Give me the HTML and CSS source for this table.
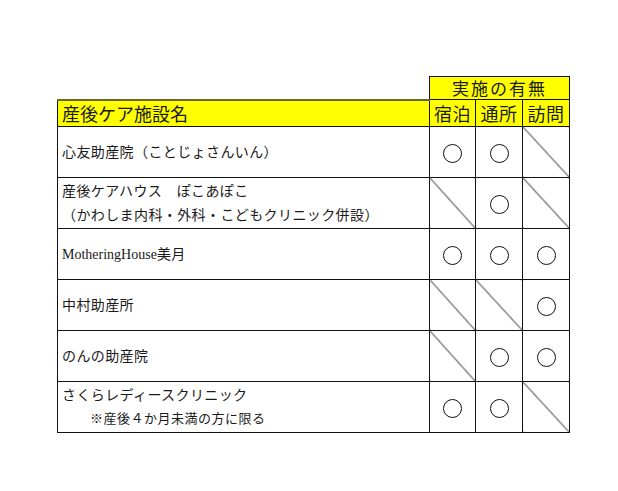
FILE: index.html
```html
<!DOCTYPE html>
<html lang="ja">
<head>
<meta charset="utf-8">
<link rel="stylesheet" href="styles.css">
</head>
<body>
<table class="sheet">
  <colgroup>
    <col class="c-name">
    <col class="c-flag1">
    <col class="c-flag">
    <col class="c-flag">
  </colgroup>
  <tr class="r-top">
    <td class="blank"></td>
    <td class="yellow group" colspan="3">実施の有無</td>
  </tr>
  <tr class="r-head">
    <td class="yellow head-name">産後ケア施設名</td>
    <td class="yellow head-flag">宿泊</td>
    <td class="yellow head-flag">通所</td>
    <td class="yellow head-flag">訪問</td>
  </tr>
  <tr class="r-body">
    <td class="name">心友助産院（ことじょさんいん）</td>
    <td class="flag"><span class="mark"></span></td>
    <td class="flag"><span class="mark"></span></td>
    <td class="flag na"></td>
  </tr>
  <tr class="r-body">
    <td class="name two"><div>産後ケアハウス　ぽこあぽこ</div><div>（かわしま内科・外科・こどもクリニック併設）</div></td>
    <td class="flag na"></td>
    <td class="flag"><span class="mark"></span></td>
    <td class="flag na"></td>
  </tr>
  <tr class="r-body">
    <td class="name"><span class="latin">MotheringHouse</span>美月</td>
    <td class="flag"><span class="mark"></span></td>
    <td class="flag"><span class="mark"></span></td>
    <td class="flag"><span class="mark"></span></td>
  </tr>
  <tr class="r-body">
    <td class="name">中村助産所</td>
    <td class="flag na"></td>
    <td class="flag na"></td>
    <td class="flag"><span class="mark"></span></td>
  </tr>
  <tr class="r-body">
    <td class="name">のんの助産院</td>
    <td class="flag na"></td>
    <td class="flag"><span class="mark"></span></td>
    <td class="flag"><span class="mark"></span></td>
  </tr>
  <tr class="r-body">
    <td class="name two"><div>さくらレディースクリニック</div><div class="note">※産後４か月未満の方に限る</div></td>
    <td class="flag"><span class="mark"></span></td>
    <td class="flag"><span class="mark"></span></td>
    <td class="flag na"></td>
  </tr>
</table>
</body>
</html>
```
FILE: styles.css
```css
html, body {
  margin: 0;
  padding: 0;
  background: #ffffff;
}

body {
  font-family: "Noto Sans CJK JP", "Noto Sans", sans-serif;
  color: #1a1a1a;
  padding: 76px 0 0 57px;
}

.sheet {
  border-collapse: collapse;
  table-layout: fixed;
  width: 512px;
}

.c-name { width: 372px; }
.c-flag1 { width: 46px; }
.c-flag { width: 47px; }

.sheet td {
  border: 1px solid #111;
  padding: 0;
}

.sheet td.blank {
  border: none;
  border-bottom: 2px solid #666633;
}

.yellow {
  background: #ffff00;
}

.r-top { height: 23px; }
.r-head { height: 27px; }
.r-body { height: 51px; }

.group {
  text-align: center;
  font-size: 17px;
  letter-spacing: 2px;
  line-height: 20px;
}

.head-name {
  font-size: 18px;
  line-height: 22px;
  padding-left: 4px !important;
  border-top: 2px solid #666633 !important;
}

.head-flag {
  text-align: center;
  font-size: 18px;
  line-height: 22px;
  letter-spacing: 0.5px;
}

.name {
  font-size: 14px;
  padding-left: 4px !important;
  vertical-align: middle;
  letter-spacing: 0.4px;
  padding-bottom: 3px !important;
}

.name.two {
  line-height: 24px;
  vertical-align: top;
  padding-bottom: 0 !important;
}

.note {
  padding-left: 28px;
  font-size: 13px;
  letter-spacing: 0.5px;
}

.latin {
  font-family: "Liberation Serif", "DejaVu Serif", serif;
  font-size: 14px;
  letter-spacing: 0;
}

.flag {
  text-align: center;
  vertical-align: middle;
  padding-bottom: 3px !important;
}

.mark {
  display: inline-block;
  width: 17px;
  height: 17px;
  border: 1.3px solid #111;
  border-radius: 50%;
  vertical-align: middle;
}

.na {
  background: linear-gradient(to top right,
    transparent calc(50% - 0.8px),
    #222 50%,
    transparent calc(50% + 0.8px));
}
```
